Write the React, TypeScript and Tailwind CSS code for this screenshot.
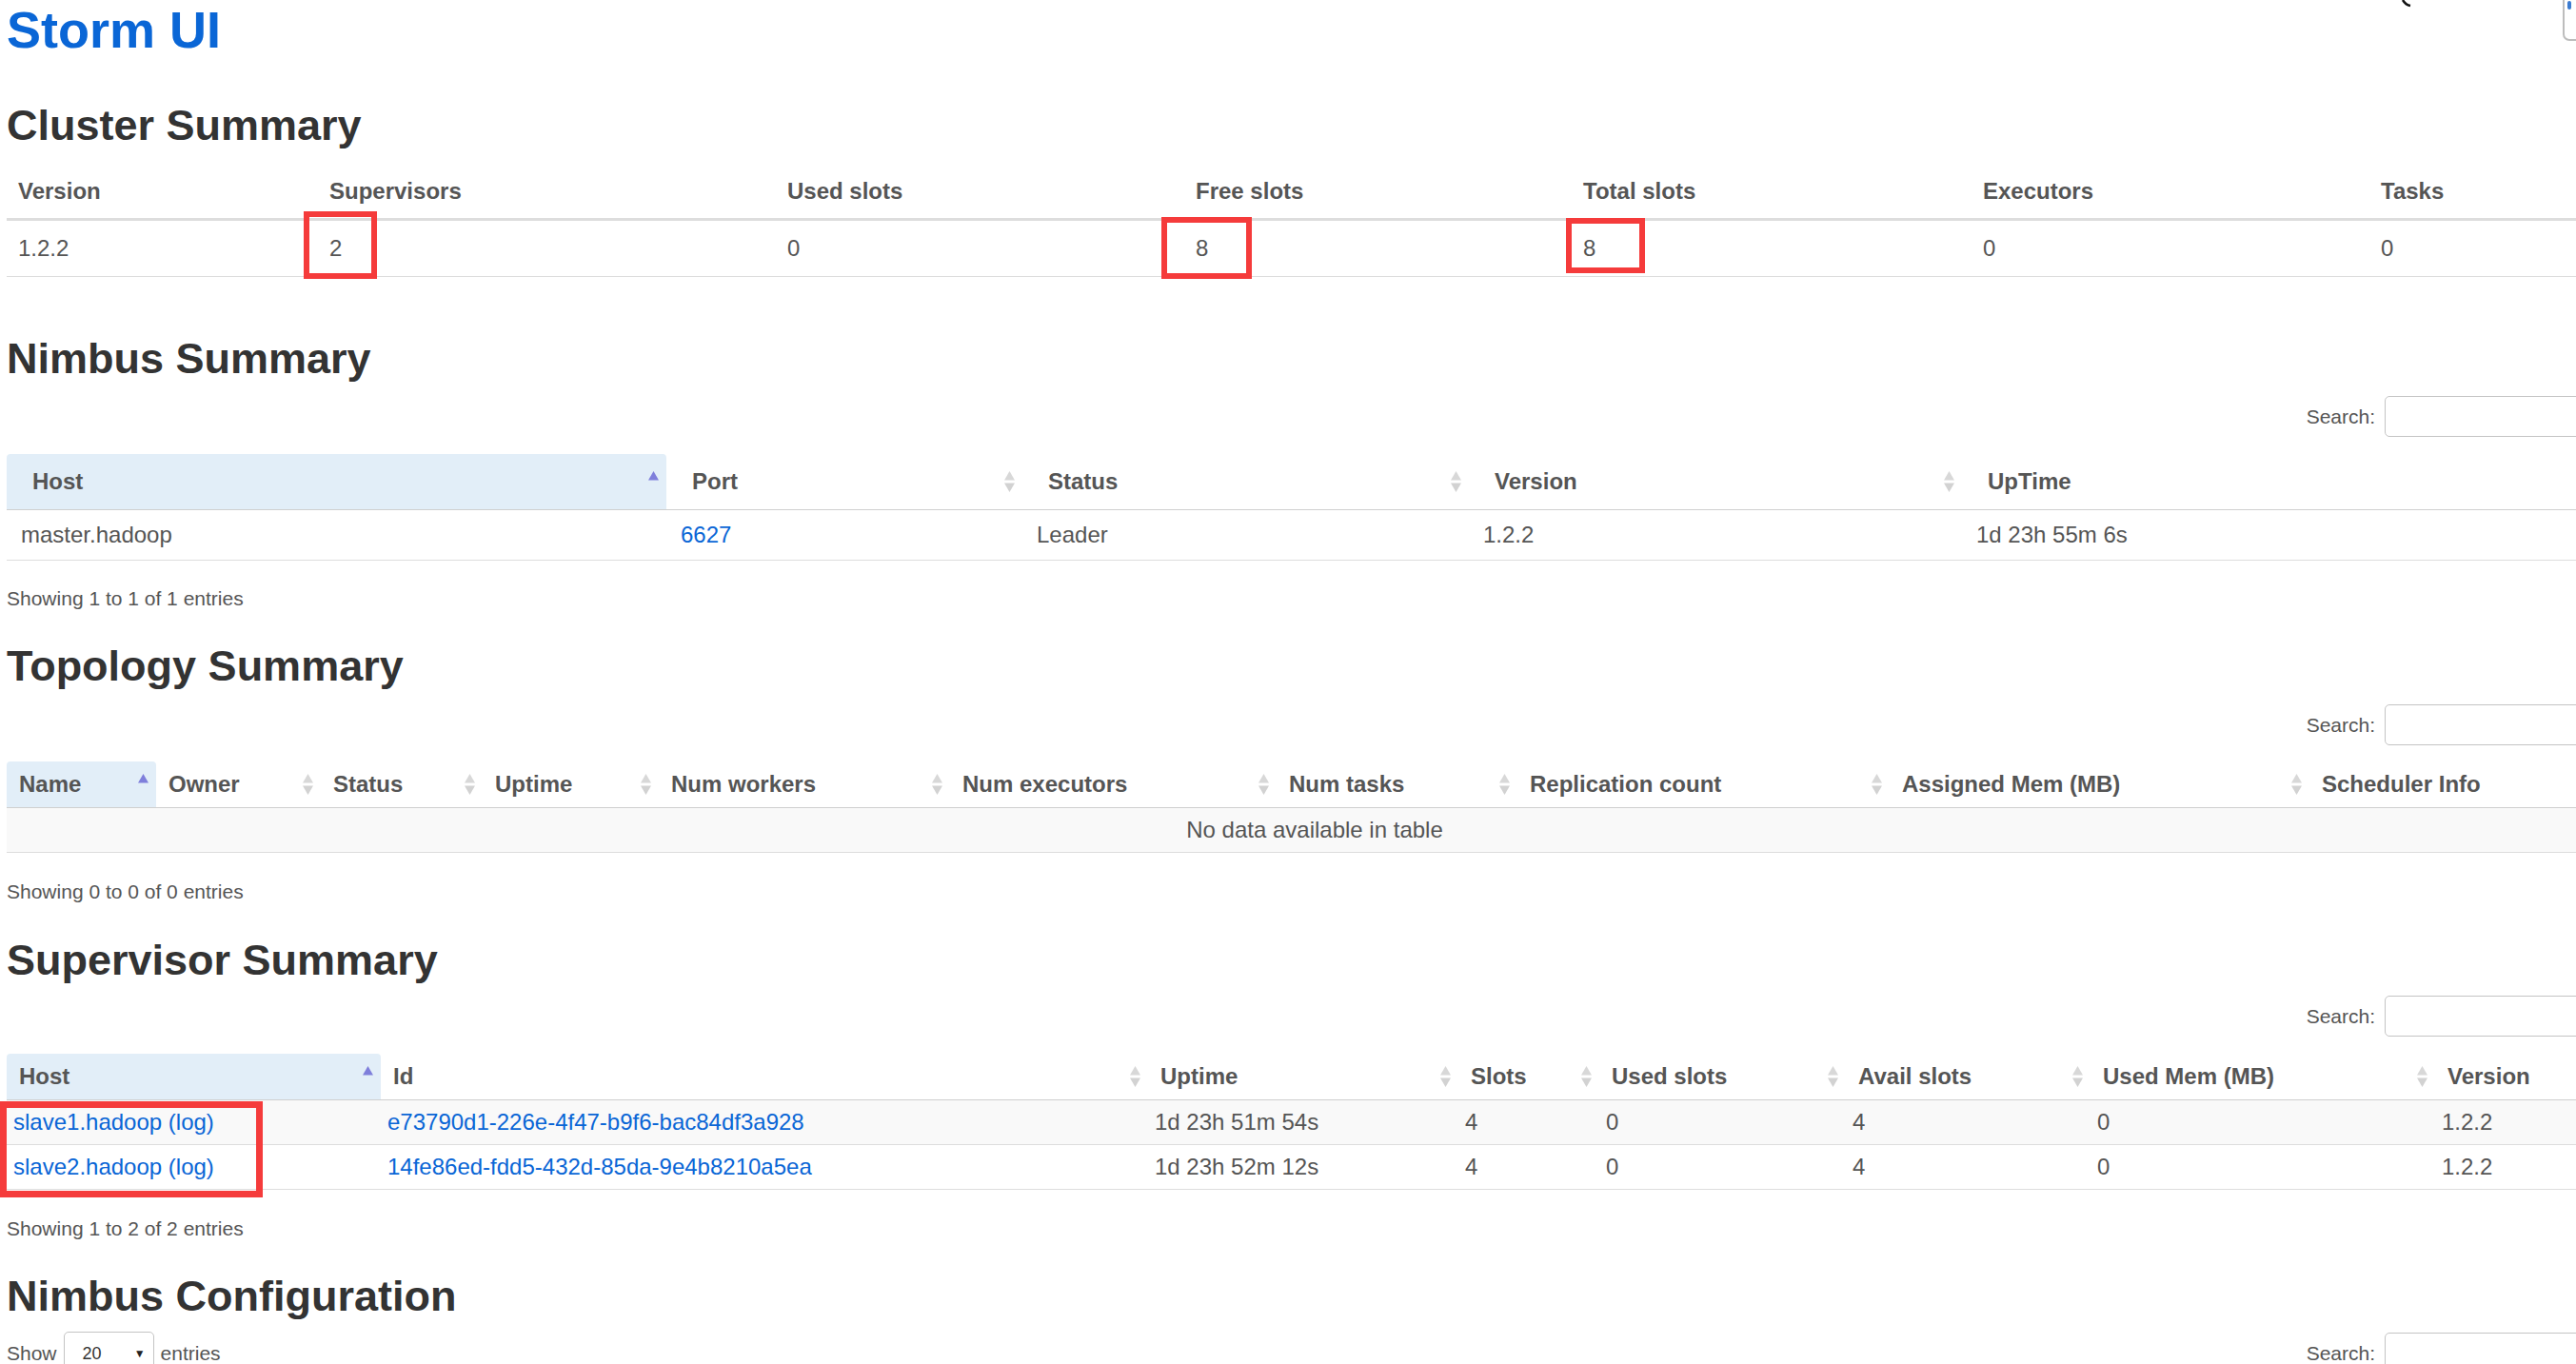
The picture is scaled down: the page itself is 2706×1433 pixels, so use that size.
import React from "react";
import clsx from "clsx";

// sort arrows of the DataTables headers
function SortIcon({ asc }: { asc?: boolean }) {
  return (
    <svg width="13" height="22" viewBox="0 0 13 22" className="shrink-0">
      <polygon points="6.5,0 12,9.5 1,9.5" fill={asc ? "#7f7fdb" : "#d8d8d8"} />
      {!asc && <polygon points="1,12.5 12,12.5 6.5,22" fill="#d2d2d2" />}
    </svg>
  );
}

function Heading({ children, className }: { children: React.ReactNode; className?: string }) {
  return <h2 className={clsx("text-[45px] leading-[50px] font-bold text-[#333]", className)}>{children}</h2>;
}

function Info({ children, className }: { children: React.ReactNode; className?: string }) {
  return <div className={clsx("leading-[30px]", className)}>{children}</div>;
}

function SearchBox({ className }: { className?: string }) {
  return (
    <div className={clsx("flex items-center justify-end gap-[10px]", className)}>
      <span className="leading-[30px]">Search:</span>
      <input
        type="text"
        readOnly
        className="w-[250px] h-[43px] rounded-[5px] border-[1.5px] border-[#c4c4c4] bg-white outline-none"
      />
    </div>
  );
}

const nimbusCols = ["Host", "Port", "Status", "Version", "UpTime"];

const topoCols = [
  "Name",
  "Owner",
  "Status",
  "Uptime",
  "Num workers",
  "Num executors",
  "Num tasks",
  "Replication count",
  "Assigned Mem (MB)",
  "Scheduler Info",
];

const supCols = ["Host", "Id", "Uptime", "Slots", "Used slots", "Avail slots", "Used Mem (MB)", "Version"];

const supervisors = [
  {
    host: "slave1.hadoop",
    id: "e73790d1-226e-4f47-b9f6-bac84df3a928",
    uptime: "1d 23h 51m 54s",
    stripe: true,
  },
  {
    host: "slave2.hadoop",
    id: "14fe86ed-fdd5-432d-85da-9e4b8210a5ea",
    uptime: "1d 23h 52m 12s",
    stripe: false,
  },
];

const clusterHead = ["Version", "Supervisors", "Used slots", "Free slots", "Total slots", "Executors", "Tasks"];
const clusterRow = ["1.2.2", "2", "0", "8", "8", "0", "0"];

export default function App() {
  return (
    <div className="relative w-[2706px] h-[1433px] overflow-hidden bg-white font-['Liberation_Sans',Arial,sans-serif] text-[21px] leading-[30px] text-[#555]">
      <div className="w-[2748px] ml-[7px]">
        <h1 className="mt-[2px] text-[54px] leading-[59px] font-bold text-[#0a66d6]">Storm UI</h1>

        {/* Cluster Summary */}
        <Heading className="mt-[46px]">Cluster Summary</Heading>
        <div className="mt-[16px] text-[24px]">
          <div className="grid grid-cols-[327px_481px_429px_407px_420px_418px_266px] h-[59px] border-b-[3px] border-[#ddd]">
            {clusterHead.map((h) => (
              <div key={h} className="flex items-center pl-[12px] font-bold">
                {h}
              </div>
            ))}
          </div>
          <div className="grid grid-cols-[327px_481px_429px_407px_420px_418px_266px] h-[59px] border-b border-[#ddd]">
            {clusterRow.map((v, i) => (
              <div key={i} className="flex items-center pl-[12px]">
                {v}
              </div>
            ))}
          </div>
        </div>

        {/* Nimbus Summary */}
        <Heading className="mt-[61px]">Nimbus Summary</Heading>
        <SearchBox className="mt-[14px]" />
        <div className="mt-[18px] text-[24px]">
          <div className="grid grid-cols-[693px_374px_469px_518px_694px] h-[59px] border-b border-[#cfcfcf]">
            {nimbusCols.map((c, i) => (
              <div
                key={c}
                className={clsx(
                  "flex items-center justify-between pl-[27px] pr-[7px] font-bold",
                  i === 0 && "bg-[#e2eef8] rounded-t-[4px]"
                )}
              >
                <span>{c}</span>
                <SortIcon asc={i === 0} />
              </div>
            ))}
          </div>
          <div className="grid grid-cols-[693px_374px_469px_518px_694px] h-[53px] border-b border-[#ddd]">
            <div className="flex items-center pl-[15px]">master.hadoop</div>
            <div className="flex items-center pl-[15px] text-[#0a66d6]">6627</div>
            <div className="flex items-center pl-[15px]">Leader</div>
            <div className="flex items-center pl-[15px]">1.2.2</div>
            <div className="flex items-center pl-[15px]">1d 23h 55m 6s</div>
          </div>
        </div>
        <Info className="mt-[25px]">Showing 1 to 1 of 1 entries</Info>

        {/* Topology Summary */}
        <Heading className="mt-[31px]">Topology Summary</Heading>
        <SearchBox className="mt-[15px]" />
        <div className="mt-[17px] text-[24px]">
          <div className="grid grid-cols-[157px_173px_170px_185px_306px_343px_253px_391px_441px_329px] h-[49px] border-b border-[#cfcfcf]">
            {topoCols.map((c, i) => (
              <div
                key={c}
                className={clsx(
                  "flex items-center justify-between pl-[13px] pr-[7px] font-bold whitespace-nowrap",
                  i === 0 && "bg-[#e2eef8] rounded-t-[4px]"
                )}
              >
                <span>{c}</span>
                <SortIcon asc={i === 0} />
              </div>
            ))}
          </div>
          <div className="flex h-[47px] items-center justify-center border-b border-[#ddd] bg-[#f9f9f9]">
            No data available in table
          </div>
        </div>
        <Info className="mt-[26px]">Showing 0 to 0 of 0 entries</Info>

        {/* Supervisor Summary */}
        <Heading className="mt-[32px]">Supervisor Summary</Heading>
        <SearchBox className="mt-[12px]" />
        <div className="mt-[18px] text-[24px]">
          <div className="grid grid-cols-[393px_806px_326px_148px_259px_257px_362px_197px] h-[49px] border-b border-[#cfcfcf]">
            {supCols.map((c, i) => (
              <div
                key={c}
                className={clsx(
                  "flex items-center justify-between pl-[13px] pr-[7px] font-bold whitespace-nowrap",
                  i === 0 && "bg-[#e2eef8] rounded-t-[4px]"
                )}
              >
                <span>{c}</span>
                <SortIcon asc={i === 0} />
              </div>
            ))}
          </div>
          {supervisors.map((s) => (
            <div
              key={s.id}
              className={clsx(
                "grid grid-cols-[393px_806px_326px_148px_259px_257px_362px_197px] h-[47px] border-b border-[#ddd]",
                s.stripe && "bg-[#f9f9f9]"
              )}
            >
              <div className="flex items-center pl-[7px] text-[#0a66d6]">
                {s.host}&nbsp;(log)
              </div>
              <div className="flex items-center pl-[7px] text-[#0a66d6]">{s.id}</div>
              <div className="flex items-center pl-[7px]">{s.uptime}</div>
              <div className="flex items-center pl-[7px]">4</div>
              <div className="flex items-center pl-[7px]">0</div>
              <div className="flex items-center pl-[7px]">4</div>
              <div className="flex items-center pl-[7px]">0</div>
              <div className="flex items-center pl-[7px]">1.2.2</div>
            </div>
          ))}
        </div>
        <Info className="mt-[26px]">Showing 1 to 2 of 2 entries</Info>

        {/* Nimbus Configuration */}
        <Heading className="mt-[31px]">Nimbus Configuration</Heading>
        <div className="mt-[12px] flex items-center justify-between">
          <div className="flex items-center">
            <span>Show</span>
            <div className="mx-[7px] flex h-[45px] w-[95px] items-center justify-between rounded-[5px] border-[1.5px] border-[#c4c4c4] pl-[19px] pr-[8px] text-[18px] text-[#333]">
              <span>20</span>
              <span className="text-[12px] text-[#222]">▼</span>
            </div>
            <span>entries</span>
          </div>
          <SearchBox />
        </div>
      </div>

      {/* red annotation boxes */}
      <div className="absolute left-[319px] top-[222px] w-[77px] h-[71px] border-[6px] border-[#f53b3b]" />
      <div className="absolute left-[1220px] top-[228px] w-[95px] h-[65px] border-[6px] border-[#f53b3b]" />
      <div className="absolute left-[1645px] top-[229px] w-[83px] h-[58px] border-[6px] border-[#f53b3b]" />
      <div className="absolute left-0 top-[1157px] w-[276px] h-[101px] border-[7px] border-[#f53b3b]" />

      {/* cut-off widgets at the top right corner */}
      <svg className="absolute left-[2522px] top-0" width="14" height="8" viewBox="0 0 14 8">
        <path d="M2 0 Q5 5 10 6" stroke="#111" strokeWidth="2.5" fill="none" />
      </svg>
      <div className="absolute left-[2692px] top-[-10px] w-[40px] h-[53px] rounded-[7px] border-2 border-[#bdbdbd] bg-white">
        <div className="ml-[3px] mt-[9px] w-[4px] h-[9px] rounded-[2px] bg-[#3b7bd0]" />
      </div>
    </div>
  );
}
